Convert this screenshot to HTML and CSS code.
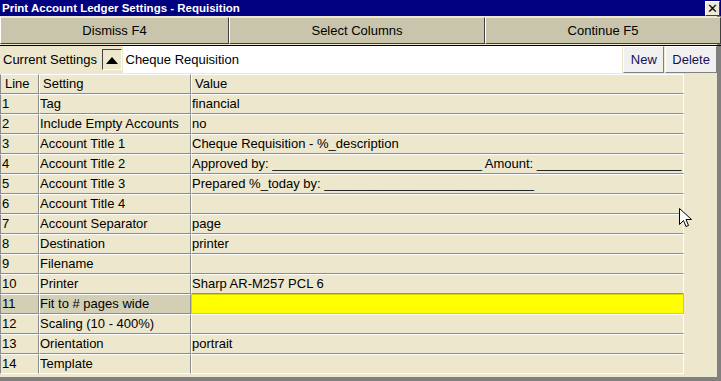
FILE: index.html
```html
<!DOCTYPE html>
<html>
<head>
<meta charset="utf-8">
<link rel="stylesheet" href="styles.css">
</head>
<body>
<div class="win">
  <div class="titlebar">
    <span class="title">Print Account Ledger Settings - Requisition</span>
    <span class="close">✕</span>
  </div>
  <div class="btnrow">
    <div class="bigbtn b1">Dismiss F4</div>
    <div class="bigbtn b2">Select Columns</div>
    <div class="bigbtn b3">Continue F5</div>
  </div>
  <div class="setrow">
    <div class="label">Current Settings</div>
    <div class="arrow"><svg width="12" height="8" viewBox="0 0 12 8"><polygon points="0,8 12,8 6,1" fill="#000"/></svg></div>
    <div class="input">Cheque Requisition</div>
    <div class="smbtn new">New</div>
    <div class="smbtn del">Delete</div>
  </div>
  <div class="gridwrap">
    <table class="grid">
      <colgroup><col class="c1"><col class="c2"><col class="c3"></colgroup>
      <thead>
        <tr><th>Line</th><th class="ind">Setting</th><th class="ind">Value</th></tr>
      </thead>
      <tbody>
        <tr><td>1</td><td>Tag</td><td>financial</td></tr>
        <tr><td>2</td><td>Include Empty Accounts</td><td>no</td></tr>
        <tr><td>3</td><td>Account Title 1</td><td>Cheque Requisition - %_description</td></tr>
        <tr><td>4</td><td>Account Title 2</td><td>Approved by: _____________________________ Amount: ____________________</td></tr>
        <tr><td>5</td><td>Account Title 3</td><td>Prepared %_today by: _____________________________</td></tr>
        <tr><td>6</td><td>Account Title 4</td><td></td></tr>
        <tr><td>7</td><td>Account Separator</td><td>page</td></tr>
        <tr><td>8</td><td>Destination</td><td>printer</td></tr>
        <tr><td>9</td><td>Filename</td><td></td></tr>
        <tr><td>10</td><td>Printer</td><td>Sharp AR-M257 PCL 6</td></tr>
        <tr class="sel"><td>11</td><td>Fit to # pages wide</td><td class="yellow"></td></tr>
        <tr><td>12</td><td>Scaling (10 - 400%)</td><td></td></tr>
        <tr><td>13</td><td>Orientation</td><td>portrait</td></tr>
        <tr><td>14</td><td>Template</td><td></td></tr>
      </tbody>
    </table>
    <svg class="cursor" width="14" height="22" viewBox="0 0 14 22"><path d="M0.5,0.5 L0.5,16.5 L4.5,12.5 L7,18.5 L9.5,17.5 L7,11.5 L12.5,11.5 Z" fill="#fff" stroke="#000" stroke-width="1"/></svg>
  </div>
</div>
</body>
</html>
```
FILE: styles.css
```css
html, body { margin: 0; padding: 0; }
body {
  width: 721px; height: 381px; overflow: hidden;
  background: #ece7cd;
  font-family: "Liberation Sans", Arial, sans-serif;
  font-size: 12px; color: #000;
}
.win {
  width: 721px; height: 381px; box-sizing: border-box;
  border-right: 4px solid #808080; border-bottom: 4px solid #808080;
  display: flex; flex-direction: column;
}
.titlebar {
  height: 16px; background: #000080; color: #fff;
  display: flex; align-items: center; justify-content: space-between;
  margin-right: -4px;
}
.title { font-weight: bold; font-size: 11.5px; padding-left: 2px; line-height: 16px; }
.close {
  width: 15px; height: 15px; background: #ece9d8; color: #000;
  font-size: 13px; line-height: 14px; text-align: center; margin-right: 1px;
  box-sizing: border-box; border: 1px solid #fff; border-right-color: #404040; border-bottom-color: #404040;
}
.btnrow { display: flex; height: 28px; margin-top: 1px; margin-right: -4px; border-bottom: 1px solid #000; }
.bigbtn {
  background: #c9c5ad; box-sizing: border-box; height: 27px;
  border-top: 1px solid #ece9d8; border-left: 1px solid #fff;
  border-right: 1px solid #404040; border-bottom: 1px solid #404040;
  display: flex; align-items: center; justify-content: center; font-size: 13px;
}
.b1 { width: 229px; }
.b2 { width: 256px; }
.b3 { flex: 1; }
.setrow { display: flex; height: 27px; align-items: stretch; }
.label {
  width: 101px; padding-left: 3px; box-sizing: border-box;
  display: flex; align-items: center; font-size: 13px;
}
.arrow {
  width: 20px; height: 21px; margin: 3px 1px 0 1px; box-sizing: border-box;
  border: 1px solid #404040; border-right-color: #fff; border-bottom-color: #fff;
  background: #ece7cd;
  display: flex; align-items: center; justify-content: center;
}
.input {
  width: 502px; background: #fff; box-sizing: border-box;
  display: flex; align-items: center; padding-left: 3px; font-size: 13px;
}
.smbtn {
  background: #f0f0f0; box-sizing: border-box; height: 27px;
  border: 1px solid #fff; border-right-color: #808080; border-bottom-color: #808080;
  display: flex; align-items: center; justify-content: center; font-size: 13px; color: #10105a;
}
.new { width: 41px; margin-left: 1px; }
.del { width: 52px; margin-left: 1px; }
.gridwrap { position: relative; flex: 1; }
.grid {
  border-collapse: separate; border-spacing: 0; table-layout: fixed;
  width: 684px; margin-top: 1px;
}
.c1 { width: 39px; }
.c2 { width: 152px; }
.c3 { width: 493px; }
.grid th, .grid td {
  height: 20px; box-sizing: border-box; padding: 0 0 1px 0;
  font-weight: normal; text-align: left; font-size: 13px;
  white-space: nowrap; overflow: hidden;
  border-left: 1px solid #fff; border-right: 1px solid #8c8c8c;
  border-top: 1px solid #fff; border-bottom: 1px solid #8c8c8c;
}
.grid td:first-child { padding-left: 1px; }
.grid th { padding-left: 3px; }
.grid th:first-child { padding-left: 4px; }
.grid td:first-child, .grid th:first-child { border-left-color: #8c8c8c; }
.grid td:last-child, .grid th:last-child { border-right-color: #fff; }
.grid tr:last-child td { border-bottom-color: #fff; }
.sel td { background: #d3cfb5; }
.sel td.yellow { background: #ffff00; border-color: #d8d800; }
.cursor { position: absolute; left: 679px; top: 135px; }
```
